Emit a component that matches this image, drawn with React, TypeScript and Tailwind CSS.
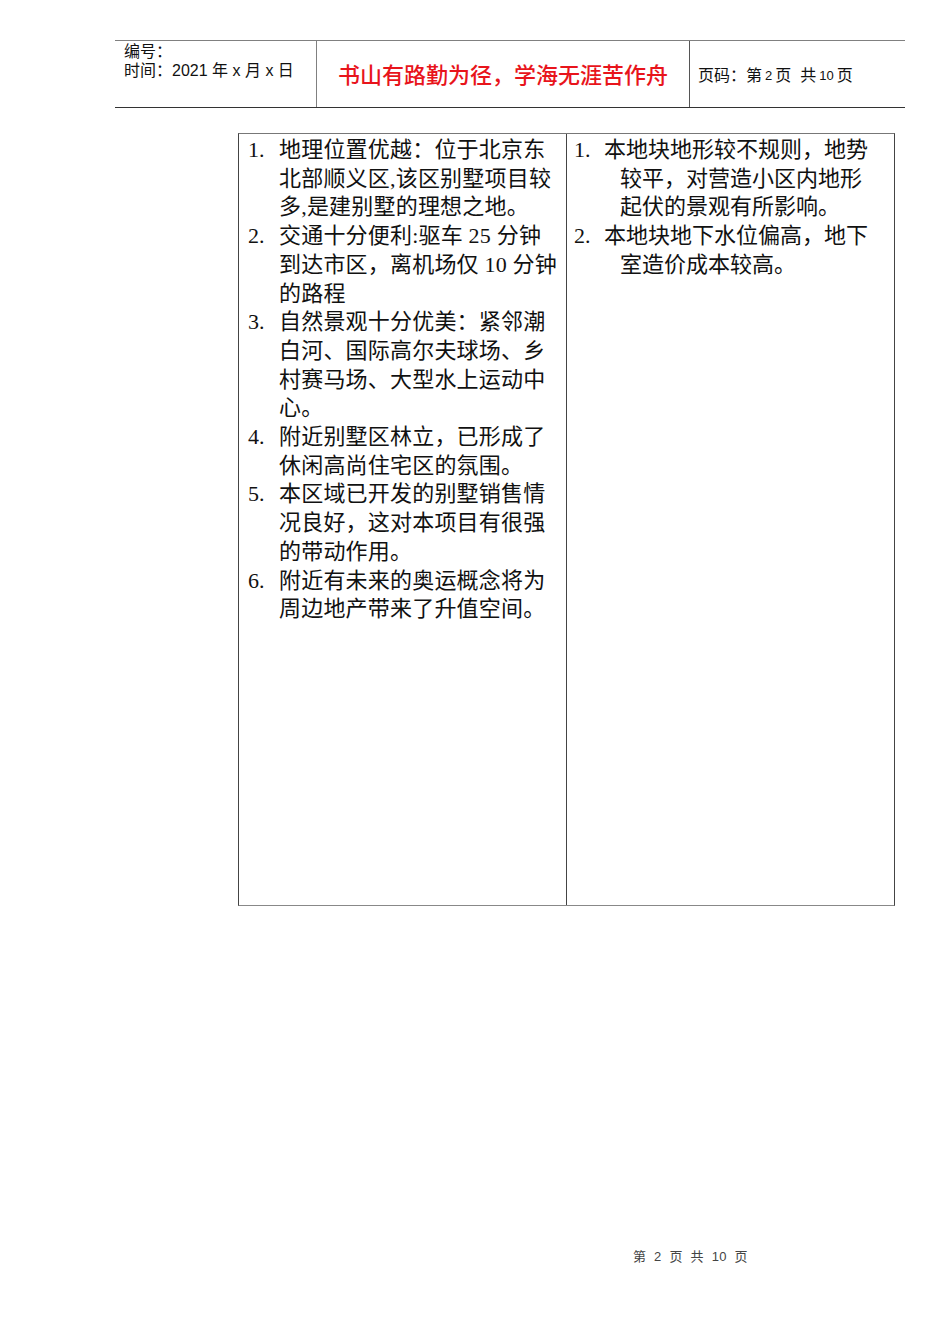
const serif = "font-['Liberation_Serif','Noto_Sans_CJK_SC',serif]";

type Item = { n: string; lines: string[] };

const strengths: Item[] = [
  { n: "1.", lines: ["地理位置优越：位于北京东", "北部顺义区,该区别墅项目较", "多,是建别墅的理想之地。"] },
  { n: "2.", lines: ["交通十分便利:驱车 25 分钟", "到达市区，离机场仅 10 分钟", "的路程"] },
  { n: "3.", lines: ["自然景观十分优美：紧邻潮", "白河、国际高尔夫球场、乡", "村赛马场、大型水上运动中", "心。"] },
  { n: "4.", lines: ["附近别墅区林立，已形成了", "休闲高尚住宅区的氛围。"] },
  { n: "5.", lines: ["本区域已开发的别墅销售情", "况良好，这对本项目有很强", "的带动作用。"] },
  { n: "6.", lines: ["附近有未来的奥运概念将为", "周边地产带来了升值空间。"] },
];

const weaknesses: Item[] = [
  { n: "1.", lines: ["本地块地形较不规则，地势", "较平，对营造小区内地形", "起伏的景观有所影响。"] },
  { n: "2.", lines: ["本地块地下水位偏高，地下", "室造价成本较高。"] },
];

function Header() {
  return (
    <div className="ml-[115px] flex h-[68px] w-[790px] border-t border-t-[#808080] border-b border-b-[#333] font-['Liberation_Sans','Noto_Sans_CJK_SC',sans-serif] text-[#111]">
      <div className="w-[201px] pl-[9px] pt-[1px] text-[16px] leading-[19px]">
        <div>编号：</div>
        <div>时间：2021 年 x 月 x 日</div>
      </div>
      <div className="flex w-[373px] items-center justify-center border-l border-[#808080] pt-[3px] text-[22px] font-medium text-[#e8141b]">
        书山有路勤为径，学海无涯苦作舟
      </div>
      <div className="flex flex-1 items-center border-l border-[#555] pl-[8px] pt-[3px] text-[16px]">
        页码：第 <span className="mx-[3px] text-[13px]">2</span> 页&nbsp;&nbsp;共 <span className="mx-[3px] text-[13px]">10</span> 页
      </div>
    </div>
  );
}

function LeftList({ items }: { items: Item[] }) {
  return (
    <div className="pl-[9px] pt-[2px]">
      {items.map((it) => (
        <div key={it.n} className="flex">
          <div className="w-[31px] shrink-0">{it.n}</div>
          <div className="tracking-[0.2px]">
            {it.lines.map((l) => (
              <div key={l} className="whitespace-pre">{l}</div>
            ))}
          </div>
        </div>
      ))}
    </div>
  );
}

function RightList({ items }: { items: Item[] }) {
  return (
    <div className="pl-[7px] pt-[2px]">
      {items.map((it) => (
        <div key={it.n}>
          {it.lines.map((l, i) =>
            i === 0 ? (
              <div key={l} className="flex whitespace-pre">
                <span className="w-[30px] shrink-0">{it.n}</span>
                <span>{l}</span>
              </div>
            ) : (
              <div key={l} className="whitespace-pre pl-[46px]">{l}</div>
            )
          )}
        </div>
      ))}
    </div>
  );
}

export default function App() {
  return (
    <div className="relative h-[1344px] w-[950px] bg-white pt-[40px]">
      <Header />
      <div
        className={`ml-[238px] mt-[25px] grid h-[773px] w-[657px] grid-cols-[327px_1fr] border-t border-t-[#777] border-x border-x-[#444] border-b border-b-[#888] text-[22px] leading-[28.7px] text-[#111] ${serif}`}
      >
        <LeftList items={strengths} />
        <div className="border-l border-[#444]">
          <RightList items={weaknesses} />
        </div>
      </div>
      <div className="mt-[343px] ml-[633px] font-['Liberation_Sans','Noto_Sans_CJK_SC',sans-serif] text-[13px] leading-[16px] tracking-[0.3px] text-[#444]">
        第&nbsp;&nbsp;2&nbsp;&nbsp;页&nbsp;&nbsp;共&nbsp;&nbsp;10&nbsp;&nbsp;页
      </div>
    </div>
  );
}
